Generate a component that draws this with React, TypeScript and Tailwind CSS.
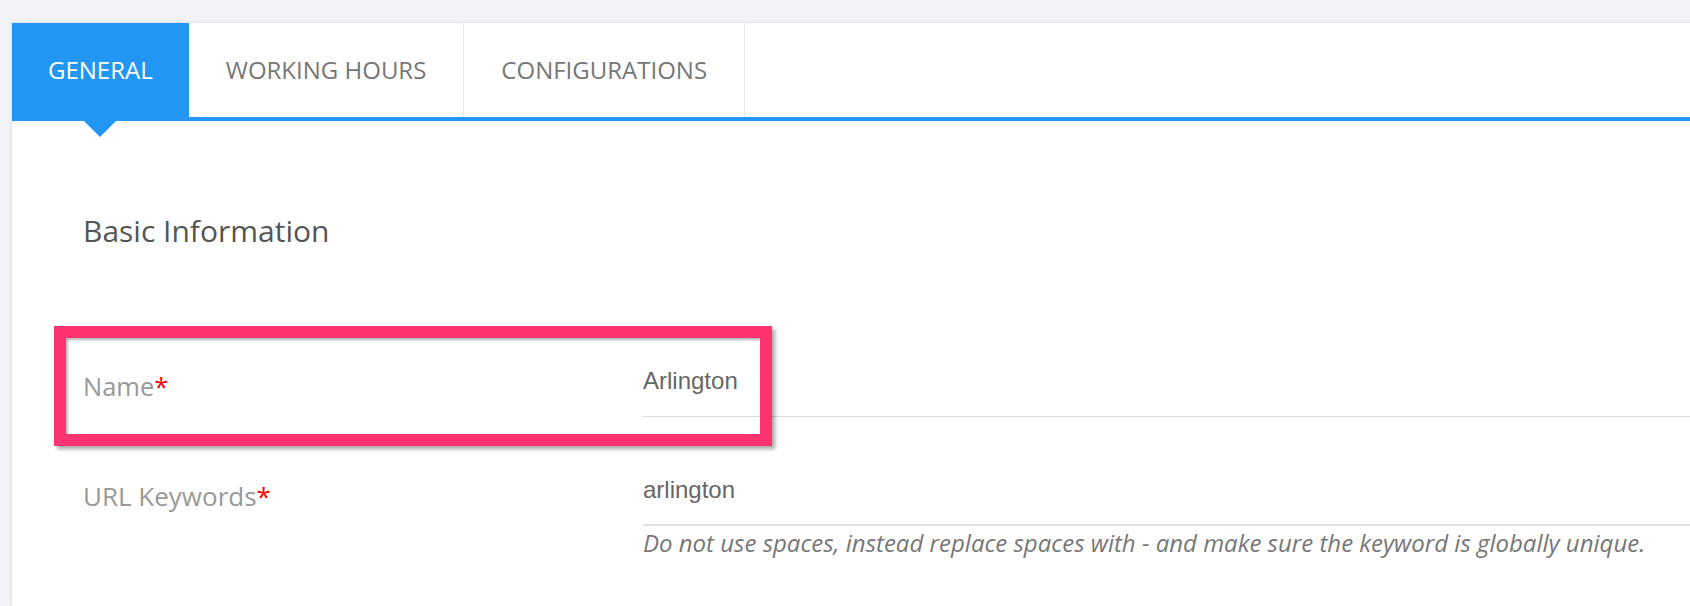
export default function App() {
  return (
    <div className="min-h-[606px] overflow-hidden bg-[#f2f3f7] pt-[23px] pl-[12px] font-['Open_Sans',sans-serif]">
      <div className="min-h-[583px] w-[1700px] bg-white shadow-[0_0_3px_rgba(0,0,0,0.12)]">
        {/* tabs */}
        <div className="flex h-[98px] border-b-4 border-[#2196f3]">
          <div className="relative flex items-center bg-[#2196f3] px-[36px] text-[24px] text-white">
            GENERAL
            <span className="absolute left-1/2 top-full h-0 w-0 -translate-x-1/2 border-l-[20px] border-r-[20px] border-t-[20px] border-l-transparent border-r-transparent border-t-[#2196f3]" />
          </div>
          <div className="flex items-center border-r border-[#e8e8e8] px-[37px] text-[24px] text-[#777]">
            WORKING HOURS
          </div>
          <div className="flex items-center border-r border-[#e8e8e8] px-[37px] text-[24px] text-[#777]">
            CONFIGURATIONS
          </div>
        </div>

        <div className="pl-[71px] pt-[90px]">
          <h2 className="text-[30px] leading-[40px] text-[#555]">Basic Information</h2>

          {/* Name */}
          <div className="relative mt-[95px] grid grid-cols-[560px_1fr]">
            <div className="pt-[22px] text-[25.5px] leading-[36px] text-[#999]">
              Name<span className="text-[#ff0000]">*</span>
            </div>
            <div className="border-b border-[#dcdcdc] py-[17px] font-['Liberation_Sans',Arial,sans-serif] text-[24px] leading-[36px] text-[#666]">
              Arlington
            </div>
            <div className="pointer-events-none absolute left-[-29px] top-[-20px] h-[120px] w-[718px] border-[12px] border-[#ff3370] shadow-[3px_3px_4px_rgba(0,0,0,0.35),inset_2px_2px_3px_rgba(0,0,0,0.3)]" />
          </div>

          {/* URL Keywords */}
          <div className="mt-[39px] grid grid-cols-[560px_1fr]">
            <div className="pt-[22px] text-[26px] leading-[36px] text-[#999]">
              URL Keywords<span className="text-[#ff0000]">*</span>
            </div>
            <div>
              <div className="border-b-2 border-[#e2e2e2] py-[16px] font-['Liberation_Sans',Arial,sans-serif] text-[24px] leading-[36px] text-[#666]">
                arlington
              </div>
              <p className="pt-[1px] text-[24px] italic leading-[32px] text-[#777]">
                Do not use spaces, instead replace spaces with - and make sure the keyword is globally unique.
              </p>
            </div>
          </div>
        </div>
      </div>
    </div>
  );
}
